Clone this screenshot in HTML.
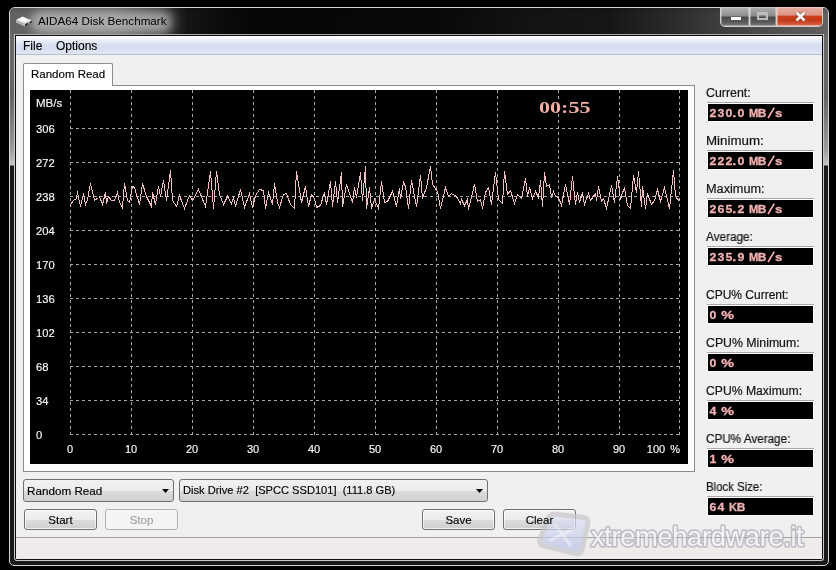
<!DOCTYPE html>
<html><head><meta charset="utf-8">
<style>
*{box-sizing:border-box;margin:0;padding:0}
html,body{width:836px;height:570px;overflow:hidden;background:#000}
body{position:relative;font-family:"Liberation Sans",sans-serif;font-size:12px;color:#000}
.a{position:absolute}
#frame{left:9px;top:7px;width:820px;height:559px;border:1px solid #d4d4d4;border-radius:6px 6px 5px 5px;
 background:linear-gradient(to bottom,#6a6a6a 0px,#666 90px,#9a9a9a 140px,#c4c4c4 157px,#1a1a1a 158px,#1a1a1a 100%);overflow:hidden}
#title{left:0;top:0;width:818px;height:26px;background:linear-gradient(to bottom,rgba(0,0,0,.12) 0,rgba(0,0,0,0) 6px),linear-gradient(to right,#626262 0px,#6c6c6c 100px,#3a3a3a 155px,#141414 178px,#060606 240px,#080808 420px,#131313 520px,#161616 600px,#2a2a2a 660px,#3a3a3a 700px,#4e4e4e 760px,#626262 818px)}
#glow{left:21px;top:3px;width:141px;height:22px;border-radius:10px;background:rgba(195,195,198,.72);filter:blur(5px)}
#client{left:14px;top:34px;width:810px;height:527px;border:1px solid #cacaca;border-top-color:#a8a8a8;border-radius:0 0 3px 3px;background:#101010}
#content{left:16px;top:36px;width:806px;height:523px;background:#f0f0f0;border-radius:0 0 2px 2px}
#menu{left:16px;top:36px;width:806px;height:19px;background:linear-gradient(to bottom,#fdfdff 0px,#fafbfe 2px,#ebeffa 4px,#e6ebf7 6px,#d9e0f1 8px,#d8dff0 13px,#dee4f3 16px,#dfe5f3 18px);border-bottom:1px solid #b8bfcf}
.txt{white-space:nowrap;line-height:1;will-change:transform}
.btn span{display:block;will-change:transform;-webkit-text-stroke:0.15px currentColor}
.combo span{-webkit-text-stroke:0.15px #000}
.cl{font-size:11px;color:#f8f8f8;-webkit-text-stroke:0.15px #f8f8f8}
.rl{font-size:12px;color:#141414;margin:2px 0 0 -1px;-webkit-text-stroke:0.2px #141414}
.vb{width:107px;height:20px;border-top:1px solid #a7a7a7;background:#000;box-shadow:inset 0 0 0 1px #fff}
.vt{left:0;top:4.5px;width:105px;height:12px;font-family:"Liberation Sans",sans-serif;font-weight:bold;font-size:11px;color:#f2b0b0;line-height:1}
.g{position:absolute;top:0;will-change:transform;text-align:center;white-space:nowrap;-webkit-text-stroke:0.3px #f2b0b0}
.combo{border:1px solid #707070;border-radius:3px;background:linear-gradient(to bottom,#f2f2f2 0%,#ebebeb 50%,#dddddd 51%,#cfcfcf 100%)}
.combo span{font-size:11.5px}
.btn{border:1px solid #707070;border-radius:3px;background:linear-gradient(to bottom,#f2f2f2 0%,#ebebeb 50%,#dddddd 51%,#cfcfcf 100%);box-shadow:inset 0 0 0 1px rgba(255,255,255,.7);text-align:center;font-size:11.5px;line-height:21px}
.btn.dis{border-color:#adb2b5;background:#f4f4f4;color:#a0a0a0;box-shadow:none}

</style></head><body>
<div id="frame" class="a">
  <div id="title" class="a"></div>
  <div id="glow" class="a"></div>
</div>
<!-- disk icon -->
<svg class="a" style="left:15px;top:15px" width="18" height="12" viewBox="0 0 36 24">
  <path d="M2 10 L15 3 L34 11 L34 15 L20 23 L2 15 Z" fill="#8a8a8a"/>
  <path d="M2 10 L15 3 L34 11 L20 18 Z" fill="#ececec"/>
  <path d="M6 9 L15 5 L24 9 L16 13 Z" fill="#ffffff"/>
  <path d="M20 18 L34 11 L34 15 L20 23 Z" fill="#3a3a3a"/>
  <path d="M2 10 L20 18 L20 23 L2 15 Z" fill="#b4b4b4"/>
  <path d="M26 16 L30 14 L30 16 L26 18 Z" fill="#cfcfcf"/>
</svg>
<div class="a txt" style="left:38px;top:15px;font-size:11.7px;color:#000">AIDA64 Disk Benchmark</div>

<!-- caption buttons -->
<div class="a" style="left:720px;top:7px;width:103px;height:20px;border:1px solid #cfcfcf;border-top:none;border-radius:0 0 5px 5px;overflow:hidden;background:#888">
  <div class="a" style="left:0;top:0;width:28px;height:19px;background:linear-gradient(to bottom,#b8b8b8 0%,#8c8c8c 48%,#4a4a4a 52%,#5a5a5a 80%,#7a7a7a 100%);box-shadow:inset 0 0 0 1px rgba(255,255,255,.3)"></div>
  <div class="a" style="left:28px;top:0;width:1px;height:19px;background:#d8d8d8"></div>
  <div class="a" style="left:29px;top:0;width:26px;height:19px;background:linear-gradient(to bottom,#b0b0b0 0%,#8a8a8a 48%,#4a4a4a 52%,#5a5a5a 80%,#7a7a7a 100%);box-shadow:inset 0 0 0 1px rgba(255,255,255,.3)"></div>
  <div class="a" style="left:55px;top:0;width:1px;height:19px;background:#e0c8c0"></div>
  <div class="a" style="left:56px;top:0;width:47px;height:19px;background:linear-gradient(to bottom,#e8b0a4 0%,#dc9484 42%,#c8401e 50%,#c43a1a 70%,#d2583a 90%,#dc7a62 100%);box-shadow:inset 0 0 0 1px rgba(255,230,225,.45)"></div>
  <div class="a" style="left:10px;top:10px;width:10px;height:3px;background:#fff;box-shadow:0 0 1px #333"></div>
  <div class="a" style="left:36px;top:5px;width:11px;height:8px;border:2px solid #bdbdbd;border-top-width:3px"></div>
  <svg class="a" style="left:73px;top:4px" width="13" height="11" viewBox="0 0 13 11"><path d="M2.5 1.5 L10.5 9.5 M10.5 1.5 L2.5 9.5" stroke="#4a2018" stroke-opacity=".5" stroke-width="4.4"/><path d="M2.5 1.5 L10.5 9.5 M10.5 1.5 L2.5 9.5" stroke="#fff" stroke-width="2.8"/></svg>
</div>

<div id="client" class="a"></div>
<div id="content" class="a"></div>
<div id="menu" class="a"></div>
<div class="a txt" style="-webkit-text-stroke:0.15px #000;left:23px;top:40px;font-size:12px">File</div>
<div class="a txt" style="-webkit-text-stroke:0.15px #000;left:56px;top:40px;font-size:12px">Options</div>

<!-- tab panel -->
<div class="a" style="left:23px;top:85px;width:672px;height:387px;border:1px solid #898c95;background:#fff"></div>
<div class="a" style="left:23px;top:63px;width:90px;height:23px;border:1px solid #898c95;border-bottom:none;background:#fff;border-radius:2px 2px 0 0"></div>
<div class="a txt" style="-webkit-text-stroke:0.15px #000;left:31px;top:69px;font-size:11.5px">Random Read</div>

<!-- chart -->
<div class="a" style="left:30px;top:90px;width:658px;height:374px;background:#000"></div>

<svg class="a" style="left:30px;top:90px" width="658" height="374" viewBox="0 0 658 374">
<g stroke="#a6a6a6" stroke-width="1" stroke-dasharray="3 3" shape-rendering="crispEdges">
<line x1="40" y1="38.5" x2="650" y2="38.5"/>
<line x1="40" y1="72.5" x2="650" y2="72.5"/>
<line x1="40" y1="106.5" x2="650" y2="106.5"/>
<line x1="40" y1="140.5" x2="650" y2="140.5"/>
<line x1="40" y1="174.5" x2="650" y2="174.5"/>
<line x1="40" y1="208.5" x2="650" y2="208.5"/>
<line x1="40" y1="242.5" x2="650" y2="242.5"/>
<line x1="40" y1="276.5" x2="650" y2="276.5"/>
<line x1="40" y1="310.5" x2="650" y2="310.5"/>
<line x1="40" y1="344.5" x2="650" y2="344.5"/>
<line x1="40.5" y1="0" x2="40.5" y2="345"/>
<line x1="101.5" y1="0" x2="101.5" y2="345"/>
<line x1="162.5" y1="0" x2="162.5" y2="345"/>
<line x1="223.5" y1="0" x2="223.5" y2="345"/>
<line x1="284.5" y1="0" x2="284.5" y2="345"/>
<line x1="345.5" y1="0" x2="345.5" y2="345"/>
<line x1="406.5" y1="0" x2="406.5" y2="345"/>
<line x1="467.5" y1="0" x2="467.5" y2="345"/>
<line x1="528.5" y1="0" x2="528.5" y2="345"/>
<line x1="589.5" y1="0" x2="589.5" y2="345"/>
<line x1="649.5" y1="0" x2="649.5" y2="345"/>
</g>
<rect x="506" y="9" width="58" height="15" fill="#000"/>
<polyline id="data" fill="none" stroke="#f0c0c0" stroke-width="1" shape-rendering="crispEdges" points="40.5,116.5 40.5,114.5 43.5,110.5 46.5,108.5 47.5,101.5 48.5,107.5 50.5,116.5 53.5,103.5 55.5,114.5 57.5,109.5 60.5,93.5 64.5,110.5 68.5,107.5 69.5,106.5 72.5,114.5 75.5,102.5 76.5,113.5 78.5,106.5 81.5,110.5 84.5,110.5 87.5,102.5 89.5,112.5 92.5,117.5 94.5,93.5 97.5,110.5 99.5,112.5 102.5,96.5 104.5,97.5 109.5,114.5 112.5,93.5 116.5,106.5 121.5,116.5 122.5,102.5 125.5,114.5 128.5,96.5 130.5,106.5 133.5,90.5 136.5,110.5 140.5,80.5 142.5,110.5 146.5,116.5 149.5,105.5 154.5,118.5 159.5,105.5 162.5,110.5 168.5,99.5 175.5,116.5 180.5,81.5 183.5,118.5 186.5,81.5 189.5,104.5 193.5,114.5 197.5,106.5 201.5,113.5 203.5,107.5 205.5,116.5 210.5,99.5 214.5,117.5 219.5,103.5 222.5,117.5 225.5,105.5 229.5,99.5 233.5,100.5 235.5,118.5 238.5,102.5 242.5,114.5 244.5,93.5 247.5,112.5 249.5,117.5 253.5,104.5 256.5,103.5 260.5,114.5 264.5,118.5 266.5,81.5 271.5,112.5 275.5,96.5 278.5,116.5 281.5,104.5 284.5,108.5 286.5,117.5 290.5,115.5 294.5,102.5 296.5,114.5 300.5,91.5 302.5,116.5 305.5,91.5 307.5,112.5 311.5,82.5 312.5,116.5 316.5,94.5 320.5,106.5 322.5,112.5 324.5,97.5 326.5,107.5 330.5,82.5 332.5,110.5 335.5,76.5 336.5,118.5 339.5,97.5 341.5,118.5 344.5,109.5 348.5,118.5 351.5,91.5 354.5,112.5 357.5,111.5 362.5,101.5 366.5,116.5 369.5,98.5 370.5,108.5 373.5,92.5 375.5,96.5 378.5,118.5 381.5,90.5 386.5,116.5 390.5,85.5 392.5,108.5 396.5,97.5 400.5,76.5 402.5,94.5 407.5,101.5 410.5,118.5 415.5,97.5 418.5,106.5 421.5,103.5 426.5,106.5 430.5,113.5 431.5,109.5 434.5,115.5 437.5,109.5 438.5,119.5 444.5,94.5 447.5,111.5 450.5,109.5 452.5,118.5 455.5,102.5 458.5,97.5 461.5,114.5 465.5,82.5 468.5,109.5 472.5,113.5 474.5,81.5 477.5,104.5 480.5,100.5 484.5,113.5 487.5,104.5 491.5,108.5 495.5,88.5 497.5,106.5 499.5,97.5 502.5,108.5 505.5,101.5 508.5,107.5 510.5,90.5 512.5,116.5 514.5,82.5 516.5,96.5 519.5,94.5 521.5,107.5 523.5,101.5 525.5,106.5 528.5,107.5 531.5,115.5 535.5,94.5 539.5,114.5 542.5,86.5 545.5,114.5 547.5,102.5 549.5,112.5 552.5,102.5 554.5,114.5 558.5,103.5 560.5,110.5 565.5,103.5 566.5,110.5 568.5,96.5 571.5,111.5 573.5,108.5 576.5,118.5 581.5,95.5 584.5,112.5 587.5,86.5 590.5,109.5 592.5,102.5 594.5,98.5 597.5,115.5 600.5,118.5 603.5,85.5 606.5,102.5 608.5,81.5 611.5,116.5 612.5,96.5 615.5,118.5 617.5,103.5 621.5,114.5 624.5,110.5 627.5,99.5 630.5,111.5 634.5,97.5 639.5,118.5 643.5,80.5 645.5,106.5 648.5,110.5 649.5,108.5"/>
</svg>
<div class="a txt cl" style="left:36px;top:98px;font-size:11.5px">MB/s</div>
<div class="a txt cl" style="left:35.6px;top:124px;font-size:11.2px">306</div>
<div class="a txt cl" style="left:35.6px;top:158px;font-size:11.2px">272</div>
<div class="a txt cl" style="left:35.6px;top:192px;font-size:11.2px">238</div>
<div class="a txt cl" style="left:35.6px;top:226px;font-size:11.2px">204</div>
<div class="a txt cl" style="left:35.6px;top:260px;font-size:11.2px">170</div>
<div class="a txt cl" style="left:35.6px;top:294px;font-size:11.2px">136</div>
<div class="a txt cl" style="left:35.6px;top:328px;font-size:11.2px">102</div>
<div class="a txt cl" style="left:35.6px;top:362px;font-size:11.2px">68</div>
<div class="a txt cl" style="left:35.6px;top:396px;font-size:11.2px">34</div>
<div class="a txt cl" style="left:35.6px;top:430px;font-size:11.2px">0</div>
<div class="a txt cl" style="left:40px;width:60px;text-align:center;top:444px">0</div>
<div class="a txt cl" style="left:101px;width:60px;text-align:center;top:444px">10</div>
<div class="a txt cl" style="left:162px;width:60px;text-align:center;top:444px">20</div>
<div class="a txt cl" style="left:223px;width:60px;text-align:center;top:444px">30</div>
<div class="a txt cl" style="left:284px;width:60px;text-align:center;top:444px">40</div>
<div class="a txt cl" style="left:345px;width:60px;text-align:center;top:444px">50</div>
<div class="a txt cl" style="left:406px;width:60px;text-align:center;top:444px">60</div>
<div class="a txt cl" style="left:467px;width:60px;text-align:center;top:444px">70</div>
<div class="a txt cl" style="left:528px;width:60px;text-align:center;top:444px">80</div>
<div class="a txt cl" style="left:589px;width:60px;text-align:center;top:444px">90</div>
<div class="a txt cl" style="left:580px;width:100px;text-align:right;top:444px;word-spacing:2px">100 %</div>
<div class="a txt" style="left:539px;top:99px;font-family:'Liberation Serif',serif;font-weight:bold;font-size:17px;color:#f2aca4;transform:scaleX(1.30);transform-origin:0 0">00:55</div>
<div class="a txt rl" style="left:707px;top:85px;transform:scaleX(1.03);transform-origin:0 0">Current:</div>
<div class="a vb" style="left:707px;top:102px"><div class="a vt"><span class="g" style="left:2.35px;width:7.7px;transform:scaleX(1.12)">2</span><span class="g" style="left:10.05px;width:7.7px;transform:scaleX(1.12)">3</span><span class="g" style="left:17.75px;width:7.7px;transform:scaleX(1.12)">0</span><span class="g" style="left:25.45px;width:4.3px;transform:scaleX(1.3)">.</span><span class="g" style="left:29.75px;width:7.7px;transform:scaleX(1.12)">0</span><span class="g" style="left:41.85px;width:9.3px;transform:scaleX(1.02)">M</span><span class="g" style="left:51.15px;width:8.3px;transform:scaleX(1.08)">B</span><svg class="g" style="left:59.5px;top:-1px" width="8.3" height="12"><path d="M1.1 11.2 L7.2 0.6" stroke="#f2b0b0" stroke-width="1.7"/></svg><span class="g" style="left:67.75px;width:7.6px;transform:scaleX(1.2)">s</span></div></div>
<div class="a txt rl" style="left:707px;top:133px;transform:scaleX(1.11);transform-origin:0 0">Minimum:</div>
<div class="a vb" style="left:707px;top:150px"><div class="a vt"><span class="g" style="left:2.35px;width:7.7px;transform:scaleX(1.12)">2</span><span class="g" style="left:10.05px;width:7.7px;transform:scaleX(1.12)">2</span><span class="g" style="left:17.75px;width:7.7px;transform:scaleX(1.12)">2</span><span class="g" style="left:25.45px;width:4.3px;transform:scaleX(1.3)">.</span><span class="g" style="left:29.75px;width:7.7px;transform:scaleX(1.12)">0</span><span class="g" style="left:41.85px;width:9.3px;transform:scaleX(1.02)">M</span><span class="g" style="left:51.15px;width:8.3px;transform:scaleX(1.08)">B</span><svg class="g" style="left:59.5px;top:-1px" width="8.3" height="12"><path d="M1.1 11.2 L7.2 0.6" stroke="#f2b0b0" stroke-width="1.7"/></svg><span class="g" style="left:67.75px;width:7.6px;transform:scaleX(1.2)">s</span></div></div>
<div class="a txt rl" style="left:707px;top:181px;transform:scaleX(1.06);transform-origin:0 0">Maximum:</div>
<div class="a vb" style="left:707px;top:198px"><div class="a vt"><span class="g" style="left:2.35px;width:7.7px;transform:scaleX(1.12)">2</span><span class="g" style="left:10.05px;width:7.7px;transform:scaleX(1.12)">6</span><span class="g" style="left:17.75px;width:7.7px;transform:scaleX(1.12)">5</span><span class="g" style="left:25.45px;width:4.3px;transform:scaleX(1.3)">.</span><span class="g" style="left:29.75px;width:7.7px;transform:scaleX(1.12)">2</span><span class="g" style="left:41.85px;width:9.3px;transform:scaleX(1.02)">M</span><span class="g" style="left:51.15px;width:8.3px;transform:scaleX(1.08)">B</span><svg class="g" style="left:59.5px;top:-1px" width="8.3" height="12"><path d="M1.1 11.2 L7.2 0.6" stroke="#f2b0b0" stroke-width="1.7"/></svg><span class="g" style="left:67.75px;width:7.6px;transform:scaleX(1.2)">s</span></div></div>
<div class="a txt rl" style="left:707px;top:229px;transform:scaleX(0.98);transform-origin:0 0">Average:</div>
<div class="a vb" style="left:707px;top:246px"><div class="a vt"><span class="g" style="left:2.35px;width:7.7px;transform:scaleX(1.12)">2</span><span class="g" style="left:10.05px;width:7.7px;transform:scaleX(1.12)">3</span><span class="g" style="left:17.75px;width:7.7px;transform:scaleX(1.12)">5</span><span class="g" style="left:25.45px;width:4.3px;transform:scaleX(1.3)">.</span><span class="g" style="left:29.75px;width:7.7px;transform:scaleX(1.12)">9</span><span class="g" style="left:41.85px;width:9.3px;transform:scaleX(1.02)">M</span><span class="g" style="left:51.15px;width:8.3px;transform:scaleX(1.08)">B</span><svg class="g" style="left:59.5px;top:-1px" width="8.3" height="12"><path d="M1.1 11.2 L7.2 0.6" stroke="#f2b0b0" stroke-width="1.7"/></svg><span class="g" style="left:67.75px;width:7.6px;transform:scaleX(1.2)">s</span></div></div>
<div class="a txt rl" style="left:707px;top:287px;transform:scaleX(1.0);transform-origin:0 0">CPU% Current:</div>
<div class="a vb" style="left:707px;top:304px"><div class="a vt"><span class="g" style="left:2.35px;width:7.7px;transform:scaleX(1.12)">0</span><span class="g" style="left:14.45px;width:13.4px;transform:scaleX(1.3)">%</span></div></div>
<div class="a txt rl" style="left:707px;top:335px;transform:scaleX(1.025);transform-origin:0 0">CPU% Minimum:</div>
<div class="a vb" style="left:707px;top:352px"><div class="a vt"><span class="g" style="left:2.35px;width:7.7px;transform:scaleX(1.12)">0</span><span class="g" style="left:14.45px;width:13.4px;transform:scaleX(1.3)">%</span></div></div>
<div class="a txt rl" style="left:707px;top:383px;transform:scaleX(1.015);transform-origin:0 0">CPU% Maximum:</div>
<div class="a vb" style="left:707px;top:400px"><div class="a vt"><span class="g" style="left:2.35px;width:7.7px;transform:scaleX(1.12)">4</span><span class="g" style="left:14.45px;width:13.4px;transform:scaleX(1.3)">%</span></div></div>
<div class="a txt rl" style="left:707px;top:431px;transform:scaleX(0.975);transform-origin:0 0">CPU% Average:</div>
<div class="a vb" style="left:707px;top:448px"><div class="a vt"><span class="g" style="left:2.35px;width:7.7px;transform:scaleX(1.12)">1</span><span class="g" style="left:14.45px;width:13.4px;transform:scaleX(1.3)">%</span></div></div>
<div class="a txt rl" style="left:707px;top:479px;transform:scaleX(0.95);transform-origin:0 0">Block Size:</div>
<div class="a vb" style="left:707px;top:496px"><div class="a vt"><span class="g" style="left:2.35px;width:7.7px;transform:scaleX(1.12)">6</span><span class="g" style="left:10.05px;width:7.7px;transform:scaleX(1.12)">4</span><span class="g" style="left:22.15px;width:8.2px;transform:scaleX(1.0)">K</span><span class="g" style="left:30.35px;width:8.3px;transform:scaleX(1.08)">B</span></div></div>

<div class="a combo" style="left:23px;top:479px;width:151px;height:23px"><span class="a txt" style="left:3px;top:5px;font-size:11.7px">Random Read</span><svg class="a" style="left:138px;top:9px" width="8" height="5"><path d="M0 0H7L3.5 4Z" fill="#000"/></svg></div>
<div class="a combo" style="left:179px;top:479px;width:309px;height:23px"><span class="a txt" style="left:3px;top:5px;font-size:11.1px">Disk Drive #2&nbsp; [SPCC SSD101]&nbsp; (111.8 GB)</span><svg class="a" style="left:296px;top:9px" width="8" height="5"><path d="M0 0H7L3.5 4Z" fill="#000"/></svg></div>
<div class="a btn" style="left:24px;top:509px;width:73px;height:21px"><span>Start</span></div>
<div class="a btn dis" style="left:105px;top:509px;width:73px;height:21px"><span>Stop</span></div>
<div class="a btn" style="left:422px;top:509px;width:73px;height:21px"><span>Save</span></div>
<div class="a btn" style="left:503px;top:509px;width:73px;height:21px"></div>
<div class="a" style="left:515px;top:538px;width:1px;height:21px;background:#d8d4d4"></div>
<!-- status bar -->
<div class="a" style="left:16px;top:537px;width:806px;height:1px;background:#a0a0a0"></div>
<div class="a" style="left:16px;top:538px;width:806px;height:21px;background:#eeebea"></div>
<!-- watermark -->
<svg class="a" style="left:520px;top:500px" width="316" height="70" viewBox="520 500 316 70">
<defs>
<linearGradient id="wg" x1="0" y1="0" x2="0" y2="1"><stop offset="0" stop-color="#e2e6f6"/><stop offset="1" stop-color="#b4bde6"/></linearGradient>
<filter id="wb" x="-20%" y="-20%" width="140%" height="140%"><feGaussianBlur stdDeviation="0.7"/></filter>
</defs>
<g opacity="0.7" filter="url(#wb)">
<g>
<path d="M547.8 519.1 Q550 513.5 556.0 514.2 L583.0 517.3 Q589 518 587.7 523.9 L582.3 549.1 Q581 555 575.2 553.6 L543.8 545.9 Q538 544.5 540.2 538.9 Z" fill="url(#wg)" stroke="#c6c6ca" stroke-width="5" stroke-linejoin="round"/>
<path d="M555 525 Q563 534 570 545 M575 528 Q563 535 550 540" stroke="#f4f4f8" stroke-width="3.4" fill="none" stroke-linecap="round" opacity=".6"/>
</g>
<text x="591" y="546" font-family="Liberation Sans" font-size="28.5" letter-spacing="-0.4" transform="translate(591 546) scale(0.96 1) translate(-591 -546)" fill="#f6f7fb" stroke="#acacb6" stroke-width="3.4" paint-order="stroke" stroke-linejoin="round">xtremehardware.it</text>
</g>
</svg>
<div class="a txt" style="-webkit-text-stroke:0.15px #000;left:504px;top:510px;width:71px;height:21px;text-align:center;font-size:11.5px;line-height:21px">Clear</div>
</body></html>
